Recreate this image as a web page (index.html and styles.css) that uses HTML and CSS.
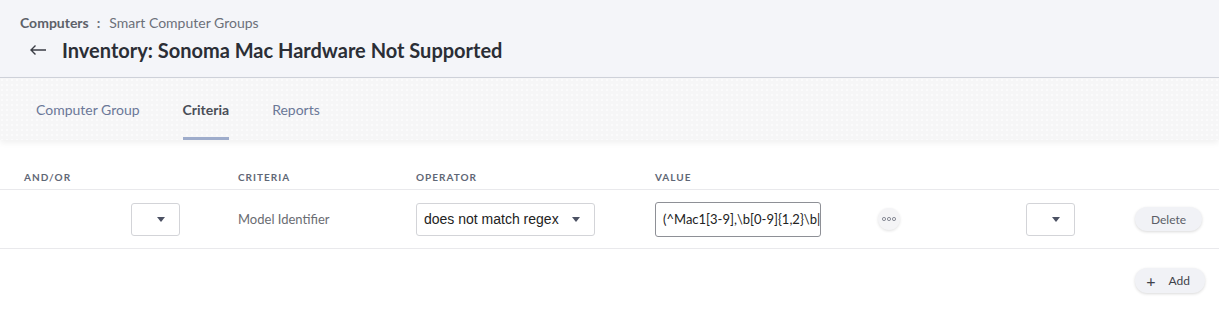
FILE: index.html
```html
<!DOCTYPE html>
<html lang="en">
<head>
    <title>Smart Computer Groups</title>
    <link rel="stylesheet" href="styles.css">
</head>
<body>
    <header class="page-header">
        <div class="breadcrumb">
            <span class="crumb-main">Computers</span>
            <span class="crumb-sep">:</span>
            <span class="crumb-sub">Smart Computer Groups</span>
        </div>
        <div class="title-row">
            <span class="back-arrow">
                <svg width="18" height="12" viewBox="0 0 18 12"><path d="M17 6H2M6.5 1.5L2 6l4.5 4.5" fill="none" stroke="#3a3d45" stroke-width="1.4"/></svg>
            </span>
            <h1>Inventory: Sonoma Mac Hardware Not Supported</h1>
        </div>
    </header>

    <nav class="tabs">
        <a href="#" class="tab">Computer Group</a>
        <a href="#" class="tab active">Criteria</a>
        <a href="#" class="tab">Reports</a>
    </nav>

    <section class="criteria">
        <div class="grid head-row">
            <div class="col-head">AND/OR</div>
            <div></div>
            <div class="col-head">CRITERIA</div>
            <div class="col-head">OPERATOR</div>
            <div class="col-head">VALUE</div>
        </div>
        <div class="grid crit-row">
            <div></div>
            <div><div class="select small"><span class="caret"></span></div></div>
            <div class="crit-name">Model Identifier</div>
            <div><div class="select wide">does not match regex<span class="caret"></span></div></div>
            <div><div class="value-input">(^Mac1[3-9],\b[0-9]{1,2}\b|</div></div>
            <div><button class="dots"><span></span><span></span><span></span></button></div>
            <div><div class="select small"><span class="caret"></span></div></div>
            <div><button class="pill">Delete</button></div>
        </div>
        <div class="add-row">
            <button class="pill add"><span class="plus">+</span>Add</button>
        </div>
    </section>
</body>
</html>
```

FILE: styles.css
```css
* {
    margin: 0;
    padding: 0;
    box-sizing: border-box;
}
body {
    font-family: "Lato", "Open Sans", sans-serif;
    background: #fff;
    width: 1219px;
    height: 320px;
    overflow: hidden;
}
.page-header {
    background: #f4f5f9;
    height: 78px;
    border-bottom: 1px solid #cfd2da;
    padding: 13px 20px 0;
}
.breadcrumb {
    font-size: 14px;
    color: #6c7079;
    height: 18px;
    display: flex;
    align-items: center;
}
.crumb-main {
    font-weight: bold;
    color: #5d6169;
}
.crumb-sep {
    margin: 0 9px 0 8px;
    font-weight: bold;
}
.title-row {
    display: flex;
    align-items: center;
    margin-top: 6px;
    height: 26px;
}
.back-arrow {
    display: flex;
    margin: 0 15px 0 9px;
}
.title-row h1 {
    font-size: 20px;
    font-weight: bold;
    color: #2b2e36;
}
.tabs {
    height: 62px;
    background-color: #f6f6f7;
    background-image: radial-gradient(circle at 2px 2px, #fbfbfc 1px, transparent 1.6px);
    background-size: 5px 5px;
    display: flex;
    padding-left: 36px;
    gap: 43px;
    box-shadow: 0 3px 6px rgba(0, 0, 0, 0.06);
    position: relative;
}
.tab {
    text-decoration: none;
    font-size: 14px;
    color: #6b7898;
    display: flex;
    align-items: center;
    border-bottom: 3px solid transparent;
    padding-top: 3px;
}
.tab.active {
    color: #4a4e57;
    font-weight: bold;
    border-bottom-color: #9eaccb;
}
.criteria {
    padding-top: 25px;
}
.grid {
    display: grid;
    grid-template-columns: 107px 107px 178px 239px 223px 148px 109px 1fr;
    padding-left: 24px;
    align-items: center;
}
.head-row {
    height: 25px;
    border-bottom: 1px solid #e9e9ec;
}
.col-head {
    font-size: 10px;
    font-weight: bold;
    letter-spacing: 1px;
    color: #5f6776;
}
.crit-row {
    height: 59px;
    border-bottom: 1px solid #e9e9ec;
}
.select {
    height: 33px;
    border: 1px solid #d3d4d8;
    border-radius: 3px;
    background: #fff;
    display: flex;
    align-items: center;
    justify-content: flex-end;
    padding-right: 13px;
    font-family: "Liberation Sans", Arial, sans-serif;
    font-size: 14px;
    color: #222;
}
.select.small {
    width: 49px;
    padding-right: 14px;
}
.select.wide {
    width: 179px;
    justify-content: space-between;
    padding-left: 7px;
    padding-right: 14px;
}
.caret {
    width: 0;
    height: 0;
    border-left: 4px solid transparent;
    border-right: 4px solid transparent;
    border-top: 5px solid #4c5163;
}
.crit-name {
    font-size: 13px;
    color: #6a6c72;
}
.value-input {
    width: 166px;
    height: 35px;
    border: 1px solid #8e9096;
    border-radius: 3px;
    display: flex;
    align-items: center;
    padding-left: 7px;
    font-family: "Lato", sans-serif;
    font-size: 13px;
    color: #222;
    white-space: nowrap;
    overflow: hidden;
}
.dots {
    width: 22px;
    height: 22px;
    border: none;
    border-radius: 50%;
    background: #f4f4f6;
    box-shadow: 0 1px 3px rgba(0, 0, 0, 0.12);
    display: flex;
    align-items: center;
    justify-content: center;
    gap: 1.5px;
}
.dots span {
    width: 3.5px;
    height: 3.5px;
    border: 1px solid #767a86;
    border-radius: 50%;
}
.pill {
    font-family: "Lato", sans-serif;
    border: none;
    background: #f1f2f6;
    border-radius: 12px;
    box-shadow: 0 1px 3px rgba(0, 0, 0, 0.15);
    font-size: 12px;
    color: #5b5e66;
    height: 24px;
    width: 67px;
}
.add-row {
    display: flex;
    justify-content: flex-end;
    padding: 19px 14px 0 0;
}
.pill.add {
    width: 70px;
    height: 25px;
    color: #3f424a;
    display: flex;
    align-items: center;
    justify-content: center;
    gap: 13px;
    padding-right: 4px;
}
.plus {
    font-size: 16px;
    color: #3f424a;
}
```
